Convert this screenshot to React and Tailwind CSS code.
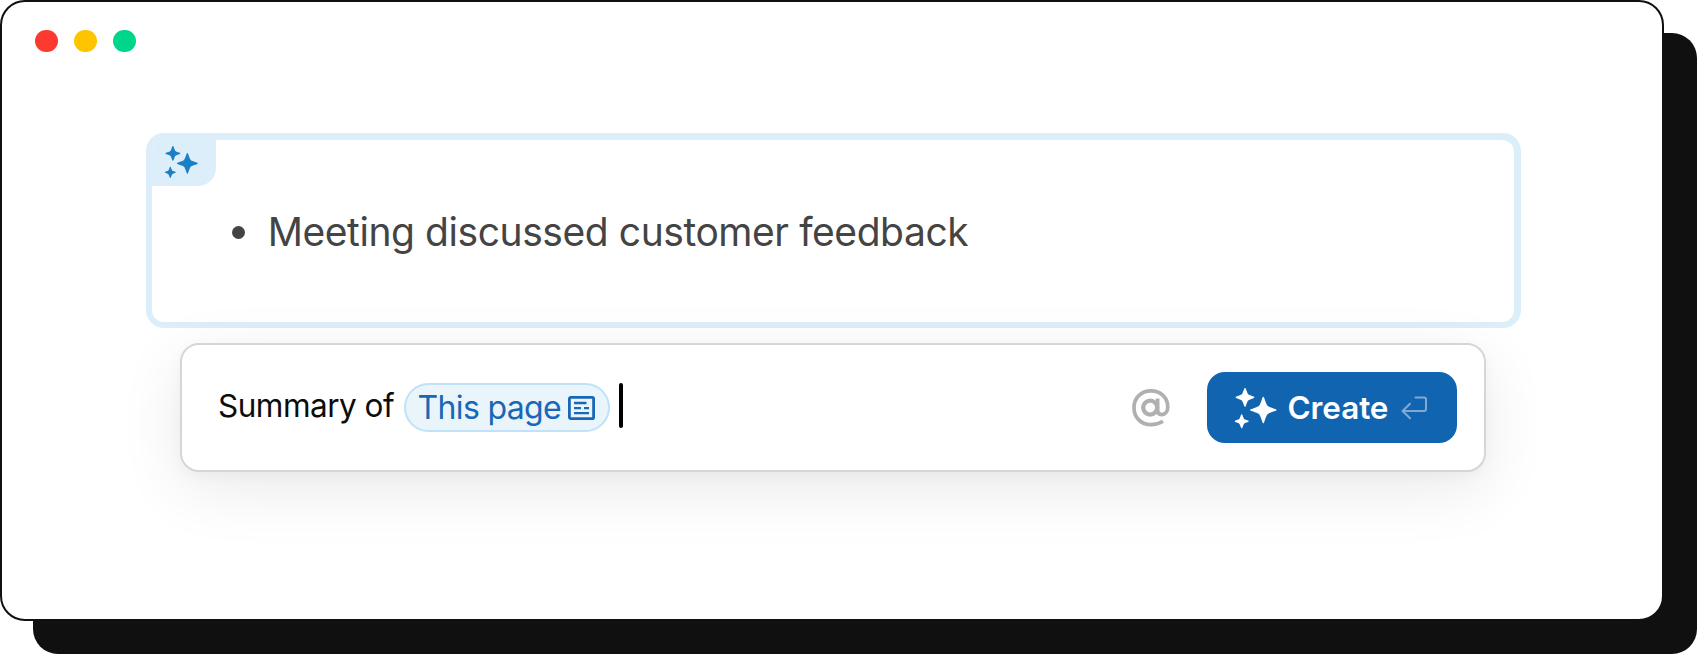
function starPath(cx, cy, r) {
  const quarter = [
    [0.14, -0.6], [0.2, -0.4], [0.3, -0.3],
    [0.4, -0.2], [0.6, -0.14], [1, 0],
  ];
  const turn = ([x, y], n) => (n === 0 ? [x, y] : turn([-y, x], n - 1));
  const at = ([x, y]) => `${(cx + x * r).toFixed(2)} ${(cy + y * r).toFixed(2)}`;
  const curves = [0, 1, 2, 3].map((n) => {
    const p = quarter.map((q) => at(turn(q, n)));
    return `C${p[0]} ${p[1]} ${p[2]}C${p[3]} ${p[4]} ${p[5]}`;
  });
  return `M${at([0, -1])}${curves.join('')}Z`;
}

function Sparkles({ className }) {
  return (
    <svg viewBox="0 0 41 40" className={className} fill="currentColor" stroke="currentColor" strokeWidth="1.5" strokeLinejoin="round" overflow="visible">
      <path d={starPath(10, 9.3, 8.6)} />
      <path d={starPath(28.3, 22, 12.4)} />
      <path d={starPath(6.7, 33.3, 6.2)} />
    </svg>
  );
}

function PageIcon() {
  return (
    <svg viewBox="0 0 27 24" className="h-[24px] w-[27px] shrink-0" fill="none" stroke="currentColor" strokeWidth="2.8">
      <rect x="1.4" y="1.4" width="24.2" height="21.2" rx="1.4" />
      <path d="M6 7H18.5M6 12.1H13M16 12.1H21M6 17.2H21" strokeWidth="2.3" />
    </svg>
  );
}

function AtIcon() {
  return (
    <svg viewBox="0 0 38 38" className="h-[38px] w-[38px]" fill="none" stroke="currentColor" strokeWidth="4.3">
      <circle cx="18.2" cy="18.6" r="7" />
      <path d="M25.6 9.4V21.1C25.6 24.1 27.2 25.6 29.6 25.6C33 25.6 35.8 22.6 35.8 18.1C35.8 8.6 28.5 1.9 19 1.9C9 1.9 2 9 2 18.7C2 28.5 9 35.7 19 35.7C23.5 35.7 27.5 34.5 31 32.3" strokeWidth="3.7" />
    </svg>
  );
}

export default function App() {
  return (
    <div className="h-[654px] w-[1697px] overflow-hidden bg-white font-['Inter',sans-serif]">
      <div className="flex h-[621px] w-[1664px] flex-col rounded-[25px] border-2 border-[#101010] bg-white shadow-[33px_33px_0_#101010]">
        <div className="flex h-[131px] gap-[16.7px] pt-[28px] pl-[33px]">
          <span className="h-[22px] w-[22.5px] rounded-full bg-[#fc3a30]" />
          <span className="h-[22px] w-[22.5px] rounded-full bg-[#ffc400]" />
          <span className="h-[22px] w-[22.5px] rounded-full bg-[#00d68a]" />
        </div>

        <div className="ml-[143.7px] h-[195px] w-[1375px] rounded-[18px] bg-[#dceefa] p-[6.5px]">
          <div className="flex h-full flex-col rounded-[12px] bg-white">
            <div className="h-[46.5px] w-[64.2px] rounded-tl-[12px] rounded-br-[18px] bg-[#dceefa] pt-[6.5px] pl-[12.5px] text-[#1b7fc4]">
              <Sparkles className="h-[31.6px] w-[32.4px]" />
            </div>
            <div className="flex items-center pt-[22px] pl-[79.5px] text-[#444444]">
              <span className="size-[13px] rounded-full bg-[#444444]" />
              <span className="pl-[23px] text-[39px] leading-[48px] tracking-[-0.43px] whitespace-nowrap">Meeting discussed customer feedback</span>
            </div>
          </div>
        </div>

        <div className="mt-[15px] ml-[178px] flex h-[129px] w-[1306px] items-center rounded-[19px] border-2 border-[#d6d6d6] bg-white pr-[27px] pl-[36px] shadow-[0_17px_64px_rgba(0,0,0,0.085),0_4px_14px_rgba(0,0,0,0.035)]">
          <span className="w-[177px] pb-[4px] text-[31.5px] leading-[40px] tracking-[-0.5px] whitespace-nowrap text-[#0c0c0c]">Summary of</span>
          <span className="ml-[9px] flex h-[49px] w-[206px] items-center justify-between rounded-full border-2 border-[#bfe2f8] bg-[#eaf4fb] pr-[13px] pl-[11.5px] text-[#1868b7]">
            <span className="text-[32px] leading-[40px] tracking-[-0.65px] whitespace-nowrap">This page</span>
            <PageIcon />
          </span>
          <span className="mb-[4px] ml-[9px] h-[45px] w-[4px] rounded-full bg-black" />
          <span className="ml-auto text-[#b0b0b0]">
            <AtIcon />
          </span>
          <button className="ml-[36.5px] flex h-[71px] w-[250.5px] items-center rounded-[18px] bg-[#1064b0] pl-[28px] text-white">
            <Sparkles className="h-[40px] w-[41px]" />
            <span className="ml-[12px] text-[31.5px] leading-[40px] font-semibold tracking-[-0.1px]">Create</span>
            <svg viewBox="0 0 26 24" className="ml-[12.5px] h-[24px] w-[26px] text-[#7faad5]" fill="none" stroke="currentColor" strokeWidth="2" strokeLinecap="round" strokeLinejoin="round">
              <path d="M14.5 1.5H23Q25 1.5 25 3.5V13Q25 15 23 15H1.5M9 7.8L1.5 15L9 22.2" />
            </svg>
          </button>
        </div>
      </div>
    </div>
  );
}
